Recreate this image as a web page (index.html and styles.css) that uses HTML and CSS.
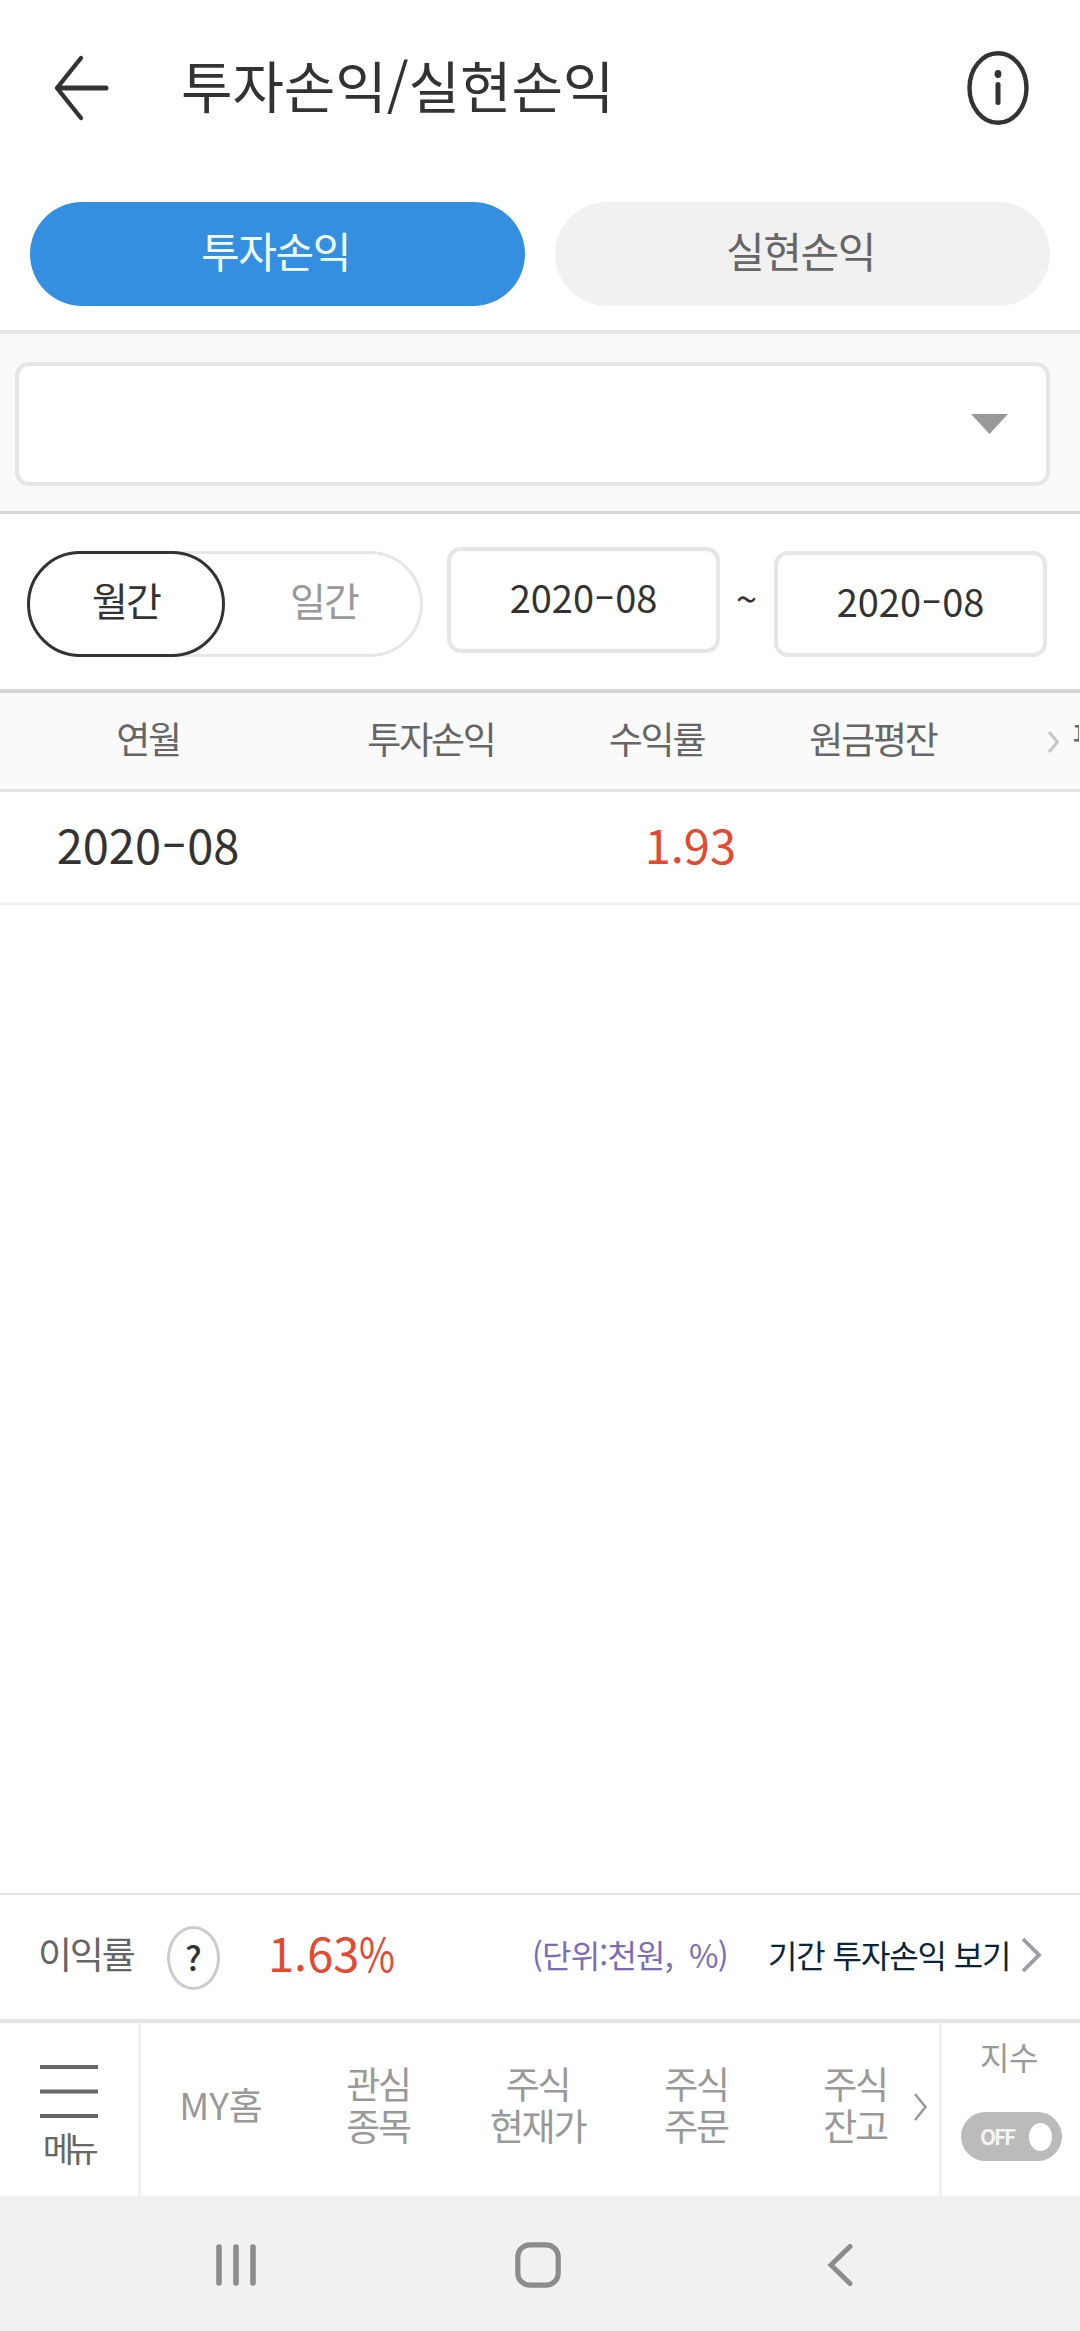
FILE: index.html
```html
<!DOCTYPE html>
<html lang="ko">
<head>
<meta charset="utf-8">
<title>투자손익/실현손익</title>
<link rel="stylesheet" href="styles.css">
</head>
<body>
<div class="app">
  <header class="header">
    <svg class="back" width="60" height="72" viewBox="0 0 60 72" fill="none" stroke="#333" stroke-linecap="round" stroke-linejoin="round"><path d="M31 6 7 36l24 30" stroke-width="4.4"/><path d="M8 36h48" stroke-width="5"/></svg>
    <h1 class="title">투자손익/실현손익</h1>
    <svg class="info" width="64" height="76" viewBox="0 0 64 76" fill="none" stroke="#333"><ellipse cx="32" cy="38" rx="28.5" ry="34.8" stroke-width="4.4"/><path d="M32 34.500v18" stroke-width="5" stroke-linecap="round"/><ellipse cx="32" cy="24" rx="3.4" ry="4" fill="#333" stroke="none"/></svg>
  </header>
  <nav class="tabs">
    <button class="tab tab-on">투자손익</button>
    <button class="tab">실현손익</button>
  </nav>
  <section class="account">
    <div class="select"><svg width="37" height="20" viewBox="0 0 37 20"><path d="M0 0h37L18.500 20z" fill="#999"/></svg></div>
  </section>
  <section class="filters">
    <div class="period"><span class="seg seg-on">월간</span><span class="seg">일간</span></div>
    <div class="date">2020<span class="dash">-</span>08</div>
    <span class="tilde">~</span>
    <div class="date date-to">2020<span class="dash">-</span>08</div>
  </section>
  <div class="thead">
    <span>연월</span><span>투자손익</span><span>수익률</span><span>원금평잔</span>
    <svg width="12" height="22" viewBox="0 0 12 22" fill="none" stroke="#c8c8c8" stroke-width="3"><path d="m1 1 8.500 10L1 21"/></svg>
    <span class="cut">평가손익</span>
  </div>
  <div class="trow">
    <span class="month">2020<span class="dash">-</span>08</span><span></span><span class="rate">1.93</span>
  </div>
  <main class="empty"></main>
  <section class="summary">
    <span class="sum-label">이익률</span>
    <span class="help">?</span>
    <span class="sum-rate">1.63<span class="pct">%</span></span>
    <span class="unit">(단위:천원, %)</span>
    <span class="link">기간 투자손익 보기</span>
    <svg width="22" height="36" viewBox="0 0 22 36" fill="none" stroke="#979da3" stroke-width="3.800"><path d="m2 2 16 16L2 34"/></svg>
  </section>
  <nav class="bottom">
    <div class="menu">
      <svg width="58" height="53" viewBox="0 0 58 53" stroke="#666" stroke-width="4"><path d="M0 2h58M0 26.500h58M0 51h58"/></svg>
      <span>메뉴</span>
    </div>
    <div class="quick">
      <span class="home">MY홈</span><span>관심<br>종목</span><span>주식<br>현재가</span><span>주식<br>주문</span><span class="last">주식<br>잔고</span>
    </div>
    <svg class="more" width="14" height="28" viewBox="0 0 14 28" fill="none" stroke="#999" stroke-width="2.500"><path d="m1 1 10.500 13L1 27"/></svg>
    <div class="index">
      <span>지수</span>
      <div class="toggle"><b>OFF</b><i></i></div>
    </div>
  </nav>
  <footer class="system">
    <svg width="40" height="42" viewBox="0 0 40 42" stroke="#8c8c8c" stroke-width="5.600" stroke-linecap="round"><path d="M3 3v36M20 3v36M37 3v36"/></svg>
    <svg class="sys-home" width="46" height="46" viewBox="0 0 46 46" fill="none" stroke="#8c8c8c" stroke-width="5.200"><rect x="2.800" y="2.800" width="40.400" height="40.400" rx="12"/></svg>
    <svg width="28" height="44" viewBox="0 0 28 44" fill="none" stroke="#8c8c8c" stroke-width="5" stroke-linecap="round"><path d="M24 3.500 5 22l19 18.500"/></svg>
  </footer>
</div>
</body>
</html>
```
FILE: styles.css
```css
* { box-sizing: border-box; }
body {
  margin: 0;
  background: #fff;
  color: #333;
  font-family: "Noto Sans CJK KR", sans-serif;
}
svg { display: block; flex: none; }
.app {
  width: 1080px;
  height: 2331px;
  display: flex;
  flex-direction: column;
  overflow: hidden;
  white-space: nowrap;
}
.app > * { flex: none; }

.header {
  height: 202px;
  display: flex;
  align-items: flex-start;
}
.back { margin: 52px 0 0 50px; }
.title {
  margin: 34px 0 0 71px;
  width: 785px;
  font-size: 56px;
  font-weight: 400;
  line-height: 100px;
  letter-spacing: -.1px;
}
.info { margin-top: 50px; }

.tabs {
  height: 128px;
  padding: 0 30px;
  display: grid;
  grid-template-columns: 1fr 1fr;
  gap: 30px;
}
.tab {
  height: 104px;
  padding: 0 4px 8px 0;
  border: 0;
  border-radius: 52px;
  background: #f1f1f1;
  color: #666;
  font: 400 42px/96px "Noto Sans CJK KR", sans-serif;
  letter-spacing: -1.4px;
}
.tab-on { background: #358fe1; color: #f2ffff; }

.account {
  height: 184px;
  padding: 28px 30px 0 15px;
  border-top: 4px solid #e6e6e6;
  border-bottom: 3px solid #d6d6d6;
  background: #fafafa;
}
.select {
  height: 124px;
  padding: 0 38px 0 0;
  display: flex;
  justify-content: flex-end;
  align-items: center;
  border: 4px solid #e6e6e6;
  border-radius: 14px;
  background: #fff;
}

.filters {
  height: 175px;
  padding: 33px 0 0 27px;
  display: flex;
  align-items: flex-start;
}
.period {
  width: 396px;
  height: 106px;
  margin-top: 4px;
  display: flex;
  border-radius: 53px;
  box-shadow: inset 0 0 0 3px #e6e6e6;
}
.seg {
  width: 198px;
  color: #999;
  font-size: 39px;
  line-height: 96px;
  letter-spacing: -2px;
  text-align: center;
}
.seg-on {
  border: 3px solid #333;
  border-radius: 53px;
  background: #fff;
  color: #333;
  line-height: 90px;
}
.date {
  width: 273px;
  height: 106px;
  margin-left: 24px;
  border: 4px solid #e6e6e6;
  border-radius: 14px;
  font-size: 38px;
  line-height: 91px;
  text-align: center;
}
.date-to { margin: 4px 0 0; }
.dash {
  display: inline-block;
  width: .555em;
  text-align: center;
  transform: translateY(-.03em) scaleX(1.6);
}
.tilde {
  width: 53px;
  margin-right: 1px;
  font-size: 38px;
  line-height: 102px;
  text-align: center;
}

.thead, .trow {
  display: grid;
  grid-template-columns: 296px 270px 182px 252px;
  align-items: center;
  text-align: center;
}
.thead {
  grid-template-columns: 296px 270px 181px 252px 49px 24px 1fr;
  height: 103px;
  border-top: 4px solid #d5d7d7;
  border-bottom: 3px solid #e4e4e4;
  background: #fafafa;
  color: #666;
  font-size: 37px;
  line-height: 91px;
  letter-spacing: -2.2px;
  padding-bottom: 5px;
}
.thead svg { grid-column: 6; margin-top: 7px; }
.thead .cut { grid-column: 7; width: 7px; overflow: hidden; text-align: left; }
.trow {
  height: 113px;
  border-bottom: 3px solid #f1f1f1;
  font-size: 47px;
  line-height: 103px;
}
.rate { padding-right: 12px; text-align: right; color: #e24a32; }
.rate, .month { align-self: start; }

.app > .empty { flex: 1; }

.summary {
  height: 126px;
  padding-left: 38px;
  display: flex;
  align-items: flex-start;
  border-top: 2px solid #e4e4e4;
  line-height: 114px;
}
.sum-label { width: 129px; color: #666; font-size: 37px; letter-spacing: -2.2px; line-height: 116px; }
.help {
  width: 53px;
  height: 64px;
  margin-top: 31px;
  border: 3px solid #ccc;
  border-radius: 50%;
  font-size: 34px;
  font-weight: 500;
  line-height: 56px;
  text-align: center;
}
.sum-rate { width: 312px; padding-left: 48px; color: #e24a32; font-size: 47px; }
.pct { display: inline-block; transform: scaleX(.83); transform-origin: left; }
.unit { width: 236px; color: #7b6cb8; font-size: 32px; letter-spacing: -.8px; word-spacing: 8px; }
.link { width: 253px; color: #0b2436; font-size: 32px; letter-spacing: -1.1px; }
.unit, .link { line-height: 119px; }
.summary svg { margin-top: 42px; }

.bottom {
  height: 177px;
  display: flex;
  border-top: 4px solid #e4e4e4;
}
.menu {
  width: 141px;
  padding: 42px 1px 0 0;
  display: flex;
  flex-direction: column;
  align-items: center;
  border-right: 3px solid #f0f0f0;
  color: #666;
}
.menu span { margin-top: 8px; font-size: 34px; line-height: 44px; letter-spacing: -6.5px; padding-right: 2px; }
.quick {
  width: 773px;
  padding: 4px 0 15px;
  display: grid;
  grid-template-columns: 160px 154px 165px 152px 1fr;
  align-items: center;
  color: #999;
  font-size: 37px;
  line-height: 42px;
  letter-spacing: -2.2px;
  text-align: center;
}
.quick .home { letter-spacing: 0; }
.quick .last { padding-left: 24px; }
.more { margin: 70px 0 0; }
.index {
  width: 141px;
  margin-left: 11px;
  padding: 8px 18px 0 0;
  border-left: 3px solid #f0f0f0;
  display: flex;
  flex-direction: column;
  align-items: flex-end;
  color: #999;
  font-size: 32px;
  line-height: 50px;
}
.index > span { margin-right: 24px; letter-spacing: -.5px; }
.toggle {
  width: 101px;
  height: 49px;
  margin-top: 31px;
  padding: 0 10px 0 19px;
  display: flex;
  align-items: center;
  justify-content: space-between;
  border-radius: 25px;
  background: #bbb;
}
.toggle b { color: #f4f4f4; font-size: 21px; font-weight: 700; line-height: 49px; letter-spacing: -2.2px; }
.toggle i { width: 23px; height: 28px; border-radius: 50%; background: #fff; }

.system {
  height: 135px;
  padding: 3px 226px 0 216px;
  display: flex;
  align-items: center;
  justify-content: space-between;
  background: #f1f1f1;
}
.sys-home { margin-right: 6px; }
```
